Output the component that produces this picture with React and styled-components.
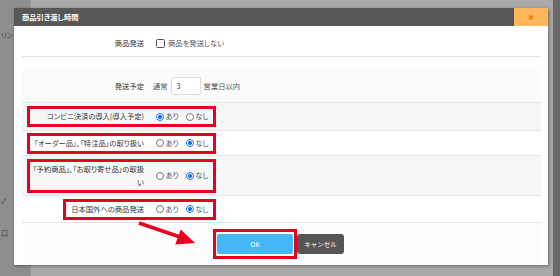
import styled, { createGlobalStyle } from "styled-components";

const GlobalStyle = createGlobalStyle`
  html, body { margin: 0; padding: 0; }
  body {
    width: 560px;
    height: 276px;
    overflow: hidden;
    font-family: "Noto Sans CJK JP", "Noto Sans", sans-serif;
    font-feature-settings: "palt";
  }
`;

const RED = "#e8001c";

const rows = [
  { label: "コンビニ決済の導入(導入予定)", yes: true, h: 28, bg: "#f6f6f6" },
  { label: "「オーダー品」、「特注品」の取り扱い", yes: false, h: 25, bg: "#fff" },
  { label: "「予約商品」、「お取り寄せ品」の取扱い", yes: false, h: 40, bg: "#f7f7f7" },
  { label: "日本国外への商品発送", yes: false, h: 27, bg: "#fff", offset: 36 },
];

const App = () => {
  return (
    <>
      <GlobalStyle />
      <Backdrop>
        <LeftPane>
          <Ghost $top={30}>リン</Ghost>
          <Ghost $top={196}>✓</Ghost>
          <Ghost $top={228}>口</Ghost>
        </LeftPane>
        <MainPane />
        <RightPane />

        <Modal>
          <Header>
            <Title>商品引き渡し時間</Title>
            <Close>✖</Close>
          </Header>
          <Body>
            <Row $h={27} $bg="#fff">
              <Label $w={118}>商品発送</Label>
              <Value>
                <Checkbox />
                商品を発送しない
              </Value>
            </Row>
            <Row $h={33} $bg="#fbfbfb" $gap={13}>
              <Label $w={118}>発送予定</Label>
              <Value>
                通常
                <Input defaultValue="3" readOnly />
                営業日以内
              </Value>
            </Row>
            {rows.map((r) => {
              const offset = r.offset || 0;
              return (
                <Row key={r.label} $h={r.h} $bg={r.bg}>
                  <Highlight $offset={offset} $w={189 - offset}>
                    <Label $w={118 - offset}>{r.label}</Label>
                    <Value>
                      <Choice>
                        <Radio $on={r.yes} />
                        あり
                      </Choice>
                      <Choice>
                        <Radio $on={!r.yes} />
                        なし
                      </Choice>
                    </Value>
                  </Highlight>
                </Row>
              );
            })}
            <Footer>
              <OkFrame>
                <OkButton>OK</OkButton>
              </OkFrame>
              <CancelButton>キャンセル</CancelButton>
            </Footer>
          </Body>
        </Modal>

        <Arrow viewBox="0 0 64 30" width="64" height="30">
          <line x1="3" y1="4" x2="44" y2="18" stroke={RED} strokeWidth="3.5" />
          <polygon points="59,24 39.3,25.5 44.7,10.5" fill={RED} />
        </Arrow>
      </Backdrop>
    </>
  );
};
export default App;

const Backdrop = styled.div`
  position: relative;
  display: flex;
  width: 560px;
  height: 276px;
`;

const LeftPane = styled.div`
  position: relative;
  width: 30px;
  background: #8e8e8e;
  border-right: 1px solid #999;
`;

const Ghost = styled.span`
  position: absolute;
  left: 1px;
  top: ${(p) => p.$top}px;
  font-size: 7px;
  color: #444;
`;

const MainPane = styled.div`
  flex: 1;
  background: #a9a9a9;
`;

const RightPane = styled.div`
  width: 7px;
  background: #6a6a6a;
`;

const Modal = styled.div`
  position: absolute;
  left: 14px;
  top: 8px;
  width: 534px;
  height: 257px;
  background: #fff;
  box-shadow: 1px 1px 3px rgba(0, 0, 0, 0.4);
  display: flex;
  flex-direction: column;
`;

const Header = styled.div`
  height: 18px;
  background: #575757;
  display: flex;
  align-items: center;
  justify-content: space-between;
`;

const Title = styled.div`
  color: #fff;
  font-size: 7.3px;
  font-weight: bold;
  padding-left: 8px;
`;

const Close = styled.div`
  width: 34px;
  height: 100%;
  background: #ffb75a;
  color: #f0841a;
  font-size: 7px;
  font-weight: 900;
  display: flex;
  align-items: center;
  justify-content: center;
`;

const Body = styled.div`
  flex: 1;
  display: flex;
  flex-direction: column;
  padding: 4px 7px 0 8px;
`;

const Row = styled.div`
  display: flex;
  align-items: center;
  box-sizing: border-box;
  height: ${(p) => p.$h}px;
  margin-top: ${(p) => p.$gap || 0}px;
  padding-left: 8px;
  background: ${(p) => p.$bg};
  border-bottom: 1px solid #e6e6e6;
`;

const Label = styled.div`
  width: ${(p) => p.$w}px;
  flex-shrink: 0;
  box-sizing: border-box;
  padding-right: 4px;
  text-align: right;
  color: #333;
  font-size: 7.3px;
  line-height: 13px;
`;

const Value = styled.div`
  display: flex;
  align-items: center;
  padding-left: 5px;
  color: #555;
  font-size: 7.3px;
  line-height: 13px;
`;

const Checkbox = styled.span`
  width: 7px;
  height: 7px;
  border: 1px solid #555;
  border-radius: 1.5px;
  margin: 0 3px;
  background: #fff;
`;

const Input = styled.input`
  width: 30px;
  height: 18px;
  box-sizing: border-box;
  margin: 0 3px;
  padding: 0 0 0 5px;
  border: 1px solid #ddd;
  border-radius: 2px;
  font-family: inherit;
  font-size: 7.3px;
  color: #444;
  outline: none;
`;

const Highlight = styled.div`
  display: flex;
  align-items: center;
  box-sizing: border-box;
  width: ${(p) => p.$w}px;
  margin-left: ${(p) => p.$offset - 3}px;
  padding: 1px 0;
  border: 3px solid ${RED};
`;

const Choice = styled.span`
  display: inline-flex;
  align-items: center;
  gap: 1.5px;
  margin: 0 4px 0 3px;
`;

const Radio = styled.span`
  width: 8px;
  height: 8px;
  box-sizing: border-box;
  border-radius: 50%;
  border: 1px solid ${(p) => (p.$on ? "#1a73e8" : "#777")};
  background: ${(p) =>
    p.$on ? "radial-gradient(circle, #1a73e8 0 45%, #fff 52%)" : "#fff"};
`;

const Footer = styled.div`
  flex: 1;
  display: flex;
  align-items: center;
  justify-content: center;
  padding-right: 6px;
  background: #fdfdfd;
`;

const OkFrame = styled.div`
  border: 3px solid ${RED};
  padding: 2px 1px;
  display: flex;
`;

const OkButton = styled.button`
  width: 76px;
  height: 20px;
  border: none;
  border-radius: 2px;
  background: #45b7f7;
  color: #fff;
  font-family: inherit;
  font-size: 6.5px;
  padding: 0;
`;

const CancelButton = styled.button`
  width: 47px;
  height: 20px;
  border: none;
  border-radius: 3px;
  background: #555;
  color: #fff;
  font-family: inherit;
  font-size: 6.5px;
  padding: 0;
`;

const Arrow = styled.svg`
  position: absolute;
  left: 136px;
  top: 219px;
  pointer-events: none;
`;
